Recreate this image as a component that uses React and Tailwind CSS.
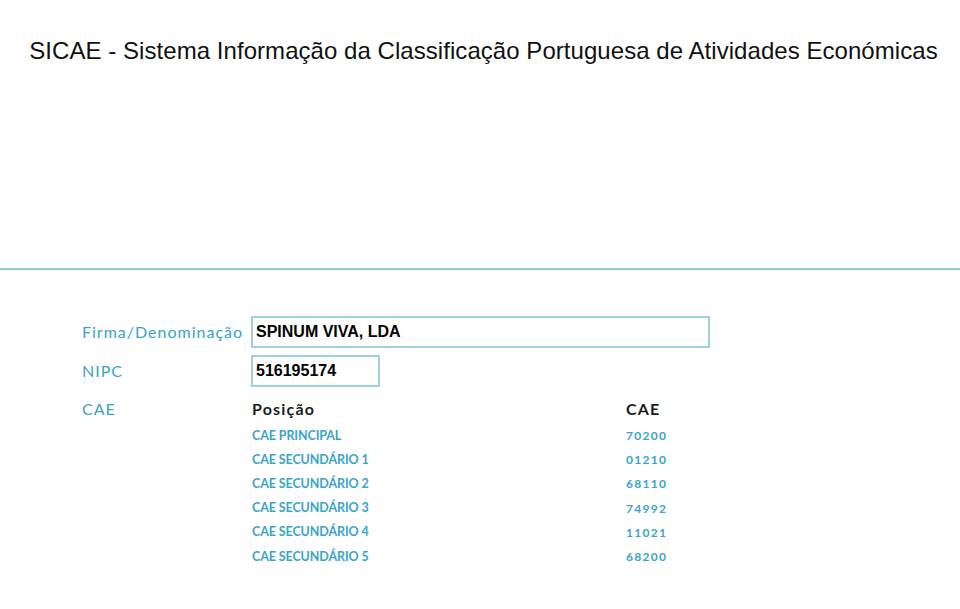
const rows = [
  ['CAE PRINCIPAL', '70200'],
  ['CAE SECUNDÁRIO 1', '01210'],
  ['CAE SECUNDÁRIO 2', '68110'],
  ['CAE SECUNDÁRIO 3', '74992'],
  ['CAE SECUNDÁRIO 4', '11021'],
  ['CAE SECUNDÁRIO 5', '68200'],
]

export default function App() {
  return (
    <main className="min-h-[609px] w-[960px] bg-white">
      <header className="h-[270px] border-b-2 border-[#93c9da] pl-[7px] pt-[37px]">
        <h1 className="text-center font-['Liberation_Sans',Arial,sans-serif] text-[24px] leading-[28px] tracking-[0.05px] text-[#111]">
          SICAE - Sistema Informação da Classificação Portuguesa de Atividades Económicas
        </h1>
      </header>

      <section className="pl-[82px] pt-[46px] font-['Lato',sans-serif]">
        <FieldRow label="Firma/Denominação">
          <div className="flex h-[32px] w-[459px] items-center border-2 border-[#9fd0df] px-[3px] font-['Liberation_Sans',Arial,sans-serif] text-[16px] font-bold text-black">
            SPINUM VIVA, LDA
          </div>
        </FieldRow>

        <FieldRow label="NIPC" className="mt-[7px]">
          <div className="flex h-[32px] w-[129px] items-center border-2 border-[#9fd0df] px-[3px] font-['Liberation_Sans',Arial,sans-serif] text-[16px] font-bold text-black">
            516195174
          </div>
        </FieldRow>

        <div className="mt-[11px] flex">
          <span className="w-[169px] text-[16px] leading-[22px] tracking-[1px] text-[#38a3c4]">CAE</span>
          <div className="w-[420px]">
            <div className="grid grid-cols-[375px_1fr] text-[16px] font-bold leading-[22px] tracking-[1.2px] text-[#1a1d22]">
              <span className="pl-[1px]">Posição</span>
              <span>CAE</span>
            </div>
            <div className="mt-[4px]">
              {rows.map(([pos, cae]) => (
                <div
                  key={pos}
                  className="grid h-[24.2px] grid-cols-[375px_1fr] items-center text-[12.5px] font-bold tracking-[-0.1px] text-[#3aa5c6]"
                >
                  <span className="pl-[1px]">{pos}</span>
                  <span className="text-[12px] tracking-[1.3px]">{cae}</span>
                </div>
              ))}
            </div>
          </div>
        </div>
      </section>
    </main>
  )
}

function FieldRow({ label, className = '', children }) {
  return (
    <div className={`flex items-center ${className}`}>
      <span className="w-[169px] text-[16px] tracking-[1px] text-[#38a3c4]">{label}</span>
      {children}
    </div>
  )
}
